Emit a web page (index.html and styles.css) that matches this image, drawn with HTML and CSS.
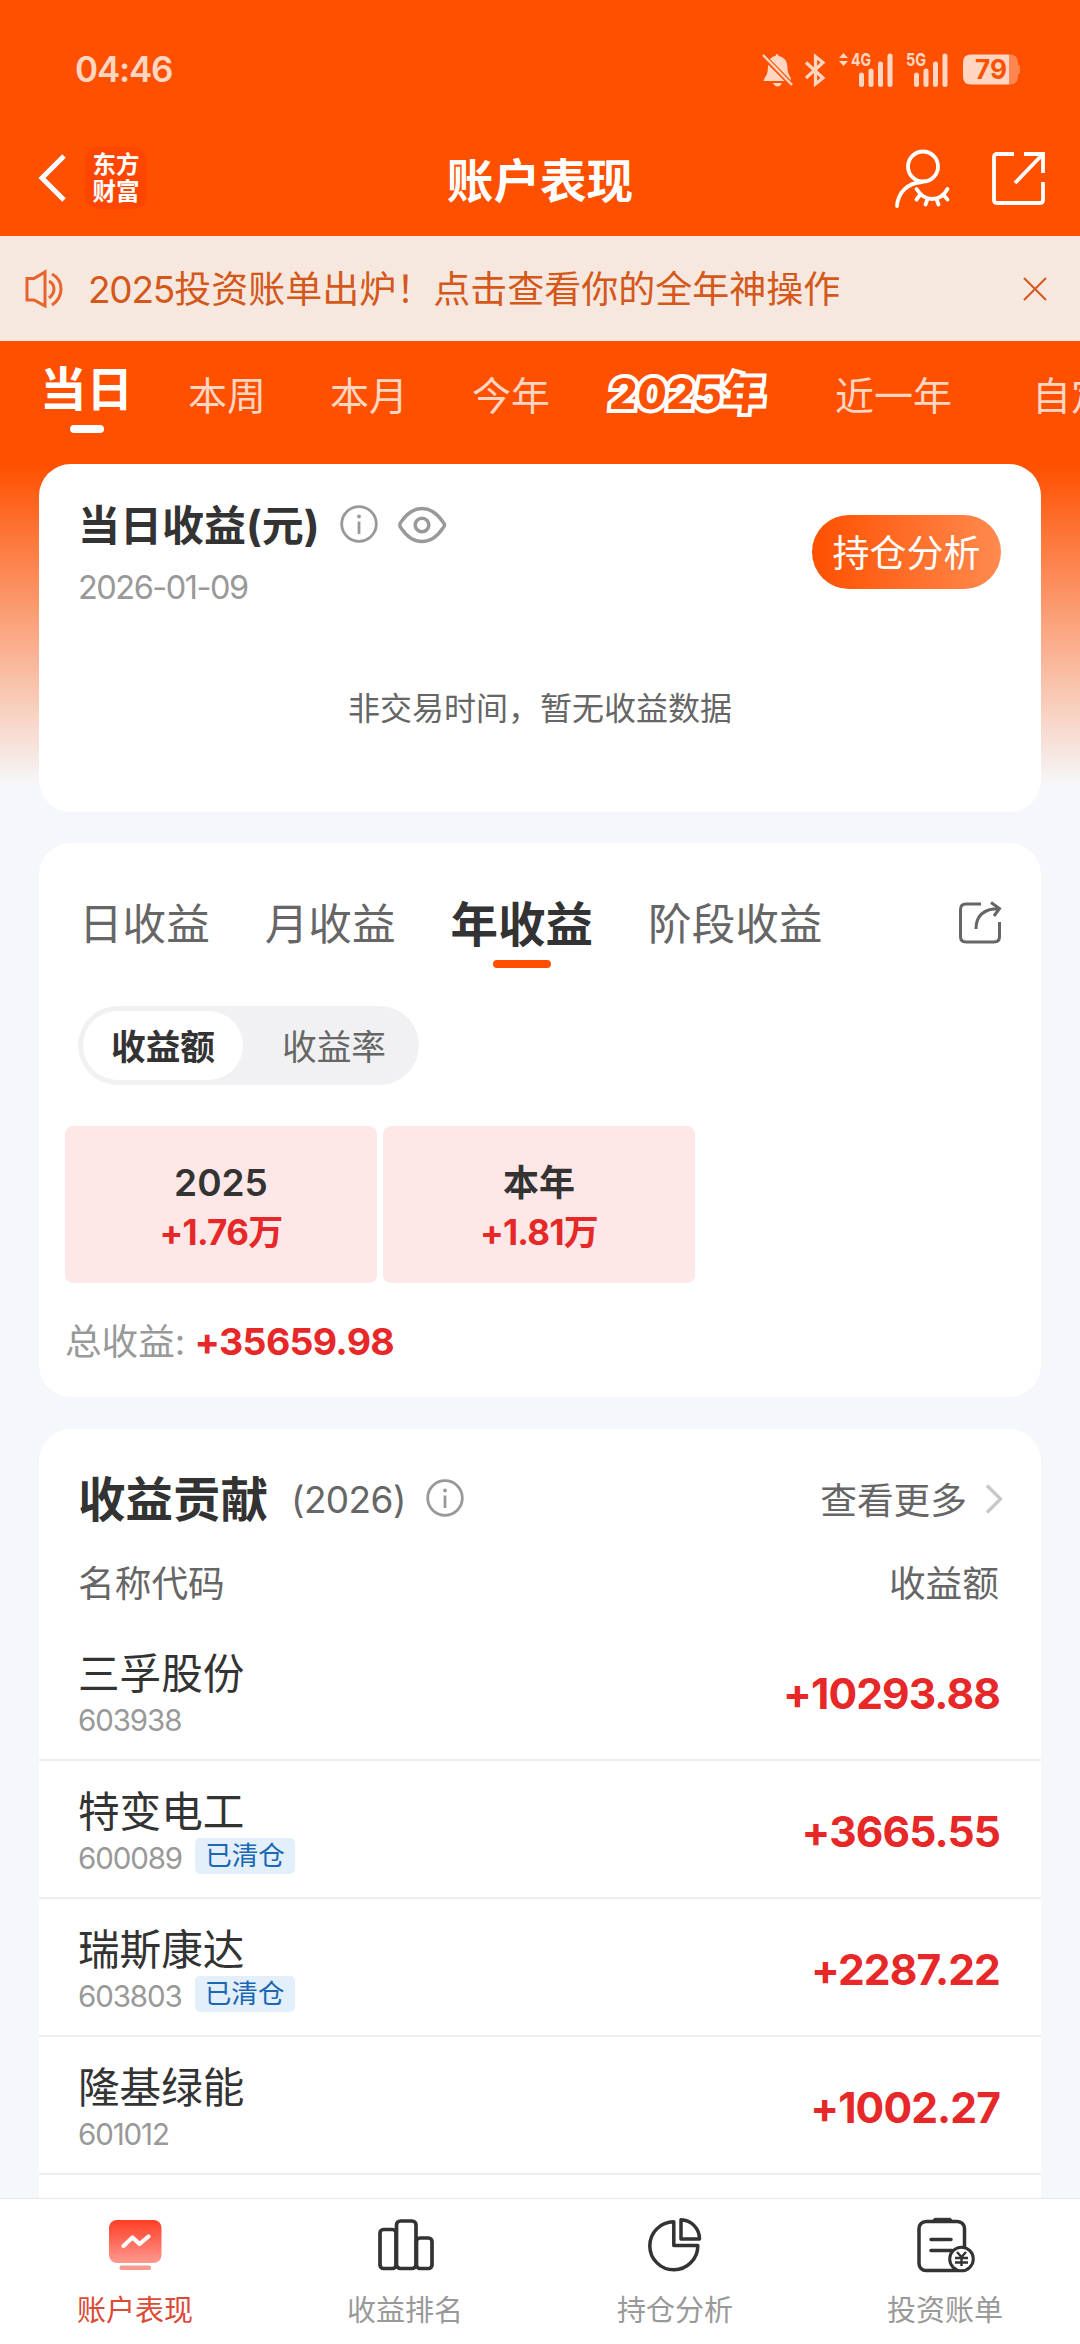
FILE: index.html
```html
<!DOCTYPE html>
<html lang="zh-CN">
<head>
<meta charset="utf-8">
<title>账户表现</title>
<link rel="stylesheet" href="styles.css">
</head>
<body>
<div class="app">
  <header class="status">
    <span class="clock">04:46</span>
    <div class="status-icons">
      <svg class="bell" width="32" height="34" viewBox="0 0 32 34"><path d="M6.500 12L22.500 28H1.500Q2 25 4 23Q6 20 6 12ZM8 6Q10 3.500 13.500 2.800Q14 1 15 1Q16 1 16.500 2.800Q25 5 25.500 14Q25.500 20 27.500 22.500Q29 24.500 29 27.500ZM11 30H20Q18 33.500 15.500 33.500Q13 33.500 11 30Z" fill="#ffd6c2"/><path d="M1 2L30 32" stroke="#ffd6c2" stroke-width="2.500"/></svg>
      <svg class="bt" width="20" height="34" viewBox="0 0 20 34"><path d="M1 9.500L18 25L10.500 31V3.500L18 9.500L1 25" fill="none" stroke="#ffd6c2" stroke-width="3.200"/></svg>
      <svg class="sig" width="54" height="34" viewBox="0 0 54 34"><path d="M4.500 0L9 5H0ZM4.500 13L9 8H0Z" fill="#ffd6c2"/><path d="M22.500 22V31.500M32 18V31.500M41.500 11V31.500M51 3V31.500" stroke="#ffd6c2" stroke-width="5" stroke-linecap="round"/><text x="12" y="13" textLength="20" lengthAdjust="spacingAndGlyphs" class="net">4G</text></svg>
      <svg class="sig" width="42" height="34" viewBox="0 0 42 34"><path d="M10.500 22V31.500M20 18V31.500M29.500 11V31.500M39 3V31.500" stroke="#ffd6c2" stroke-width="5" stroke-linecap="round"/><text x="0" y="13" textLength="20" lengthAdjust="spacingAndGlyphs" class="net">5G</text></svg>
      <svg class="bat" width="57" height="34" viewBox="0 0 57 34"><path d="M46 1.500H47Q55 1.500 55 10V11.500L57 13V20L55 21.500V23Q55 31.500 47 31.500H46Z" fill="#ff8650"/><path d="M8 1.500H46V31.500H8Q0 31.500 0 23.500V9.500Q0 1.500 8 1.500Z" fill="#ffd6c2"/><text x="12" y="26" textLength="32" lengthAdjust="spacingAndGlyphs" class="pct">79</text></svg>
    </div>
  </header>

  <nav class="navbar">
    <div class="nav-left">
      <svg width="28" height="48" viewBox="0 0 28 48"><path d="M25 2L3 24L25 46" fill="none" stroke="#fff" stroke-width="5"/></svg>
      <div class="logo"><span>东方</span><span>财富</span></div>
    </div>
    <h1>账户表现</h1>
    <div class="nav-right">
      <svg width="56" height="60" viewBox="0 0 56 60"><g fill="none" stroke="#fff" stroke-width="3.800" stroke-linecap="round"><circle cx="29" cy="17.500" r="15"/><path d="M28 33C14 34 4 43 3 57"/><path d="M22.500 40Q29 50 38 50Q48 50 53.500 40"/><path d="M26 46L22.500 50.500M33.500 50L31.500 55.500M42.500 50L44.500 55.500M49.500 46L53.500 50.500"/></g></svg>
      <svg width="53" height="53" viewBox="0 0 53 53"><path d="M22 2H5Q2 2 2 5V48Q2 51 5 51H48Q51 51 51 48V30M32 2H51V21M51 2L23 31" fill="none" stroke="#fff" stroke-width="3.800"/></svg>
    </div>
  </nav>

  <div class="notice">
    <svg width="38" height="38" viewBox="0 0 38 38"><g fill="none" stroke="#e8642c" stroke-width="3"><path d="M2 8.500H9L20 2V36L9 30H2Z"/><path d="M24 11Q29 14 29 19Q29 24 24 28M27 4Q36 9 36 19Q36 29 27 35"/></g></svg>
    <p><span class="num">2025</span>投资账单出炉！点击查看你的全年神操作</p>
    <svg class="close" width="24" height="24" viewBox="0 0 24 24"><path d="M1 1L23 23M23 1L1 23" stroke="#d4581a" stroke-width="2"/></svg>
  </div>

  <div class="periods">
    <div class="period on"><span>当日</span><i></i></div>
    <div class="period">本周</div>
    <div class="period">本月</div>
    <div class="period">今年</div>
    <div class="period special"><span>2025</span>年</div>
    <div class="period">近一年</div>
    <div class="period last">自定义</div>
  </div>

  <main class="content">
    <section class="card today">
      <div class="today-head">
        <div>
          <div class="today-title">
            <h2>当日收益(元)</h2>
            <svg class="info" width="38" height="38" viewBox="0 0 38 38"><circle cx="19" cy="19" r="17.300" fill="none" stroke="#999" stroke-width="2.800"/><circle cx="19" cy="11.500" r="1.900" fill="#999"/><path d="M19 16.500V29" stroke="#999" stroke-width="2.800"/></svg>
            <svg class="eye" width="48" height="38" viewBox="0 0 48 38"><path d="M2 19Q1.500 17.500 3 16Q12 2.500 24 2.500Q36 2.500 45 16Q46.500 17.500 46.500 19Q46.500 20.500 45 22Q36 35.500 24 35.500Q12 35.500 3 22Q1.500 20.500 2 19Z" fill="none" stroke="#999" stroke-width="3.400"/><circle cx="24" cy="19" r="6.800" fill="none" stroke="#999" stroke-width="3.600"/></svg>
          </div>
          <p class="date">2026-01-09</p>
        </div>
        <button class="analyze">持仓分析</button>
      </div>
      <p class="empty">非交易时间，暂无收益数据</p>
    </section>

    <section class="card history">
      <div class="tabs">
        <span class="tab">日收益</span>
        <span class="tab">月收益</span>
        <span class="tab on">年收益<i></i></span>
        <span class="tab">阶段收益</span>
        <svg class="share" width="44" height="44" viewBox="0 0 44 44"><g fill="none" stroke="#666" stroke-width="3"><path d="M23 3H8Q2.500 3 2.500 8.500V35.500Q2.500 41 8 41H36Q41.500 41 41.500 35.500V21"/><path d="M18 28Q18 8 41 7.500M33 1.500L41.500 7.500L36 15"/></g></svg>
      </div>
      <div class="segment"><span class="seg on">收益额</span><span class="seg">收益率</span></div>
      <div class="tiles">
        <div class="tile"><b>2025</b><strong>+1.76万</strong></div>
        <div class="tile"><b class="cn">本年</b><strong>+1.81万</strong></div>
      </div>
      <p class="total">总收益: <strong>+35659.98</strong></p>
    </section>

    <section class="card contrib">
      <div class="contrib-head">
        <h2>收益贡献</h2>
        <span class="year">(2026)</span>
        <svg class="info" width="38" height="38" viewBox="0 0 38 38"><circle cx="19" cy="19" r="17.300" fill="none" stroke="#999" stroke-width="2.800"/><circle cx="19" cy="11.500" r="1.900" fill="#999"/><path d="M19 16.500V29" stroke="#999" stroke-width="2.800"/></svg>
        <span class="more">查看更多</span>
        <svg width="18" height="30" viewBox="0 0 18 30"><path d="M2 1.500L15.500 15L2 28.500" fill="none" stroke="#c8c8c8" stroke-width="3.400"/></svg>
      </div>
      <div class="cols"><span>名称代码</span><span>收益额</span></div>
      <div class="row">
        <div><h3>三孚股份</h3><p class="code">603938</p></div>
        <strong>+10293.88</strong>
      </div>
      <div class="row">
        <div><h3>特变电工</h3><p class="code">600089<em>已清仓</em></p></div>
        <strong>+3665.55</strong>
      </div>
      <div class="row">
        <div><h3>瑞斯康达</h3><p class="code">603803<em>已清仓</em></p></div>
        <strong>+2287.22</strong>
      </div>
      <div class="row">
        <div><h3>隆基绿能</h3><p class="code">601012</p></div>
        <strong>+1002.27</strong>
      </div>
    </section>
  </main>

  <footer class="tabbar">
    <div class="item on">
      <svg width="60" height="56" viewBox="0 0 60 56"><defs><linearGradient id="g" x1="0" y1="0" x2="0" y2="1"><stop offset="0" stop-color="#ff3d24"/><stop offset="1" stop-color="#ff9a90"/></linearGradient></defs><rect x="4" y="3" width="52.500" height="43" rx="8" fill="url(#g)"/><path d="M18.500 29L27.500 20.500L34.500 27L43.500 19.500" fill="none" stroke="#fff" stroke-width="4.200" stroke-linecap="round" stroke-linejoin="round"/><rect x="14.500" y="48.500" width="31.500" height="4.500" rx="2" fill="#f49a8e"/></svg>
      <span>账户表现</span>
    </div>
    <div class="item">
      <svg width="60" height="56" viewBox="0 0 60 56"><g fill="none" stroke="#333" stroke-width="3.700"><rect x="5" y="12.500" width="16" height="39" rx="3.500"/><rect x="21.500" y="4" width="19.500" height="47.500" rx="4"/><rect x="41.500" y="21" width="15.500" height="30.500" rx="3.500"/></g></svg>
      <span>收益排名</span>
    </div>
    <div class="item">
      <svg width="60" height="56" viewBox="0 0 60 56"><g fill="none" stroke="#333" stroke-width="3.500" stroke-linejoin="round"><path d="M28.800 4.800A24 24 0 1 0 52.800 28.500H28.800Z"/><path d="M36 2.800V22H54.500A19 19 0 0 0 36 2.800Z"/></g></svg>
      <span>持仓分析</span>
    </div>
    <div class="item">
      <svg width="60" height="56" viewBox="0 0 60 56"><path d="M17 4L19.500 1.300H35.500L38 4Z" fill="#333" stroke="#333"/><g fill="none" stroke="#333" stroke-width="3.500" stroke-linecap="round"><rect x="4" y="4.500" width="45.500" height="49" rx="7"/><path d="M16 22.500H36M16 33.500H37"/></g><circle cx="46.500" cy="42" r="11.800" fill="#fff" stroke="#333" stroke-width="3"/><path d="M42 35L46.500 40L51 35M46.500 40V49M40 41H53M40 45.500H53" fill="none" stroke="#333" stroke-width="2.400"/></svg>
      <span>投资账单</span>
    </div>
  </footer>
</div>
</body>
</html>
```
FILE: styles.css
```css
* { box-sizing: border-box; margin: 0; padding: 0; }
body { font-family: Inter, "Noto Sans CJK SC", sans-serif; color: #333; background: #f6f7fa; }
svg { display: block; flex: none; overflow: visible; }
i, em { font-style: normal; }

.app {
  width: 1080px; height: 2344px; overflow: hidden;
  display: flex; flex-direction: column;
  background: linear-gradient(#ff5000 464px, #f6f7fa 785px);
}

.status { height: 124px; padding: 16px 60px 0 75px; flex: none; display: flex; align-items: center; justify-content: space-between; color: #ffd6c2; }
.clock { font-size: 35px; font-weight: 600; letter-spacing: -1.2px; line-height: 44px; padding-bottom: 2px; }
.status-icons { display: flex; align-items: center; }
.bt { margin-left: 11px; }
.sig { margin-left: 14px; }
.sig + .sig { margin-left: 13px; }
.bat { margin-left: 15px; }
.net { font-size: 18px; font-weight: 700; fill: #ffd6c2; }
.pct { font-size: 27px; font-weight: 700; fill: #ff5000; }

.navbar { height: 112px; flex: none; padding: 0 35px 0 39px; display: grid; grid-template-columns: 1fr auto 1fr; align-items: center; color: #fff; }
.nav-left { display: flex; align-items: center; gap: 18px; padding-bottom: 4px; }
.logo { width: 62px; height: 62px; border-radius: 14px; background: #ff4600; display: flex; flex-direction: column; align-items: center; justify-content: center; padding-bottom: 1px; }
.logo span { font-size: 23.500px; line-height: 27px; font-weight: 700; }
h1 { font-size: 46.600px; line-height: 60px; font-weight: 700; margin-left: -4px; padding-top: 1px; }
.nav-right { display: flex; align-items: center; justify-content: flex-end; gap: 42px; padding-bottom: 3px; }

.notice { height: 105px; flex: none; background: #f6e7df; color: #d4581a; display: flex; align-items: center; padding: 0 33px 0 25px; }
.notice p { font-size: 37px; line-height: 50px; margin-left: 25px; flex: 1; white-space: nowrap; padding-top: 3px; }
.notice .num { letter-spacing: -1.200px; }

.periods { height: 123px; flex: none; display: flex; align-items: flex-start; padding-left: 40px; color: #ffd6c2; white-space: nowrap; overflow: hidden; }
.period { font-size: 39px; line-height: 60px; padding-top: 25px; margin-right: 64px; flex: none; }
.period.on { width: 94px; padding-top: 18px; font-size: 46.500px; font-weight: 700; color: #fff; margin-right: 54px; }
.period.on i { display: block; width: 34px; height: 8px; border-radius: 4px; background: #fff; margin: 6px auto 0; }
.period.special { width: 160px; color: #ff5000; font-size: 42px; font-weight: 800; -webkit-text-stroke: 8px #fff; paint-order: stroke fill; stroke-linejoin: round; transform: skewX(-5deg); padding-top: 23px; letter-spacing: 0.700px; margin-left: -3px; }
.period.last { margin-left: 16px; }

.content { flex: 1; min-height: 0; overflow: hidden; padding: 0 39px; display: flex; flex-direction: column; gap: 31px; }
.card { background: #fff; border-radius: 32px; flex: none; }

.today { height: 348px; padding: 39px 40px 0; }
.today-head { display: flex; justify-content: space-between; height: 150px; }
.today-title { display: flex; align-items: center; height: 46px; }
.today-title h2 { font-size: 42px; line-height: 46px; font-weight: 700; margin-left: -1px; }
.today-title .info { margin-left: 20px; margin-bottom: 4px; }
.eye { margin-left: 20px; margin-bottom: 3px; }
.date { margin-top: 19px; margin-left: -1px; font-size: 32.500px; line-height: 40px; color: #999; letter-spacing: -1.500px; }
.analyze { margin-top: 12px; width: 189px; height: 74px; border: 0; border-radius: 37px; background: linear-gradient(90deg, #ff5000, #ff8a4f); color: #fff; font: inherit; font-size: 37px; line-height: 74px; padding-top: 2px; white-space: nowrap; text-align: center; }
.empty { font-size: 32px; line-height: 40px; margin-top: 36px; text-align: center; color: #666; }

.history { height: 554px; padding: 52px 26px 0; }
.tabs { display: flex; height: 80px; padding: 0 13px 0 14px; }
.tab { font-size: 43.600px; line-height: 60px; color: #666; margin-right: 55px; }
.tab.on { font-size: 47.500px; font-weight: 700; color: #333; }
.tab i { display: block; width: 58px; height: 8px; border-radius: 4px; background: #ff5000; margin: 5px auto 0; }
.share { margin: 6px 0 0 auto; }
.segment { margin: 31px 0 0 13px; width: 341px; height: 79px; border-radius: 40px; background: #f1f1f3; padding: 5px; display: flex; align-items: center; }
.seg { width: 160px; height: 69px; line-height: 72px; text-align: center; font-size: 34.700px; color: #666; flex: none; margin-right: 11px; }
.seg.on { background: #fff; border-radius: 35px; font-weight: 700; color: #333; }
.tiles { display: grid; grid-template-columns: 312px 312px; gap: 6px; margin-top: 41px; }
.tile { height: 157px; border-radius: 8px; background: #fde8e7; display: flex; flex-direction: column; align-items: center; padding-top: 32px; }
.tile b { font-size: 37px; line-height: 50px; font-weight: 600; }
.tile .cn { font-weight: 700; font-size: 36px; }
.tile strong { font-size: 35px; line-height: 49px; color: #e62828; letter-spacing: -0.700px; }
.total { margin-top: 34px; font-size: 36.600px; line-height: 50px; color: #999; white-space: pre; }
.total strong { font-size: 37.500px; color: #e62828; letter-spacing: -0.700px; margin-left: -1px; }

.contrib { margin-top: 1px; padding-top: 41px; height: 900px; }
.contrib-head { display: flex; align-items: center; height: 60px; padding: 0 38px 0 39px; }
.contrib-head h2 { font-size: 47.500px; line-height: 60px; font-weight: 700; }
.year { font-size: 37px; color: #666; margin-left: 23px; letter-spacing: -0.600px; margin-bottom: 2px; }
.contrib-head .info { margin-left: 20px; margin-bottom: 4px; }
.more { margin-left: auto; font-size: 36.700px; color: #666; margin-right: 18px; margin-bottom: 4px; }
.contrib-head svg:last-child { margin-bottom: 2px; }
.cols { display: flex; justify-content: space-between; padding: 0 42px 0 39px; margin-top: 29px; height: 64px; line-height: 50px; font-size: 36.700px; color: #666; }
.row { height: 138px; border-bottom: 2px solid #eeeeef; display: flex; align-items: center; justify-content: space-between; padding: 5px 41px 0 39px; }
.row h3 { font-size: 41.600px; line-height: 54px; font-weight: 400; margin-top: -1px; }
.code { font-size: 29.500px; line-height: 38px; height: 38px; color: #999; display: flex; align-items: center; letter-spacing: -1.100px; }
.code em { margin-left: 13px; width: 100px; height: 36px; border-radius: 5px; background: #e3effa; color: #1b67b3; font-size: 26.600px; line-height: 35px; text-align: center; letter-spacing: 0; margin-bottom: 5px; }
.row strong { font-size: 42.500px; line-height: 54px; color: #e62828; letter-spacing: -0.900px; }

.tabbar { height: 146px; flex: none; background: #fff; border-top: 1px solid #e8e8ea; display: grid; grid-template-columns: repeat(4, 1fr); }
.item { display: flex; flex-direction: column; align-items: center; padding-top: 18px; }
.item span { font-size: 29px; line-height: 40px; margin-top: 18px; color: #999; }
.item.on span { color: #dc4a38; }
```
